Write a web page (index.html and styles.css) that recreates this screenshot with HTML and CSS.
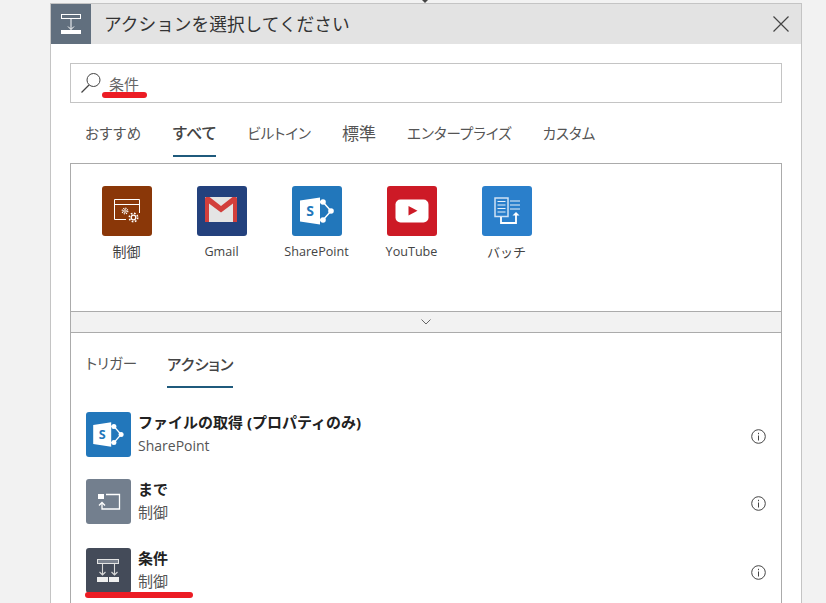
FILE: index.html
```html
<!DOCTYPE html>
<html lang="ja">
<head>
  <meta charset="UTF-8" />
  <title>アクションを選択してください</title>
  <link rel="stylesheet" href="styles.css">
</head>
<body>
  <div class="top-caret"></div>
  <div class="panel">
    <div class="panel-header">
      <div class="header-icon">
        <svg width="40" height="40" viewBox="0 0 40 40">
          <rect x="10.500" y="10.500" width="19" height="4" fill="none" stroke="#fff"/>
          <path d="M20 15v10.500M17 22.500l3 3 3-3" fill="none" stroke="#fff"/>
          <rect x="10" y="26" width="20" height="4" fill="#fff"/>
        </svg>
      </div>
      <div class="header-title">アクションを選択してください</div>
      <svg class="close-icon" width="16" height="16" viewBox="0 0 16 16">
        <path d="M.5.5l15 15M15.500.5l-15 15" stroke="#444" stroke-width="1.2" fill="none"/>
      </svg>
    </div>

    <div class="panel-body">
      <div class="search-box">
        <svg width="22" height="22" viewBox="0 0 22 22">
          <circle cx="13.500" cy="8" r="6.500" fill="none" stroke="#444" stroke-width="1"/>
          <path d="M9 13L1.500 20.500" stroke="#444" stroke-width="1.200" fill="none"/>
        </svg>
        <span class="search-text">条件</span>
      </div>

      <div class="tabs">
        <span class="tab tab-wide">おすすめ</span>
        <span class="tab active">すべて</span>
        <span class="tab">ビルトイン</span>
        <span class="tab tab-kanji">標準</span>
        <span class="tab">エンタープライズ</span>
        <span class="tab">カスタム</span>
      </div>

      <div class="connector-box">
        <div class="connector">
          <div class="tile brown">
            <svg width="50" height="50" viewBox="0 0 50 50">
              <path d="M24 33.500H12.500V13.500h25V27M12.500 18.500h25" fill="none" stroke="#fff" stroke-width="1"/>
              <circle cx="23" cy="25" r="1.300" fill="none" stroke="#fff" stroke-width="1"/>
              <circle cx="23" cy="25" r="2.800" fill="none" stroke="#fff" stroke-width="1.200" stroke-dasharray="1.200 1"/>
              <circle cx="31.500" cy="31.500" r="2.300" fill="none" stroke="#fff" stroke-width="1.300"/>
              <circle cx="31.500" cy="31.500" r="4.200" fill="none" stroke="#fff" stroke-width="1.600" stroke-dasharray="1.700 1.600"/>
            </svg>
          </div>
          <div class="tile-label label-kanji">制御</div>
        </div>
        <div class="connector">
          <div class="tile navy">
            <svg width="50" height="50" viewBox="0 0 50 50">
              <rect x="8" y="11" width="32" height="25" rx="1" fill="#e4e4e4"/>
              <path d="M12 36H8V12.500c0-1 1-1.500 2-1.500h2.500L24 20l11.500-9H38c1 0 2 .5 2 1.500V36h-4V17.500L24 26.500 12 17.500z" fill="#d23f3c"/>
            </svg>
          </div>
          <div class="tile-label">Gmail</div>
        </div>
        <div class="connector">
          <div class="tile blue">
            <svg width="50" height="50" viewBox="0 0 50 50">
              <use href="#sp-mark"/>
            </svg>
          </div>
          <div class="tile-label">SharePoint</div>
        </div>
        <div class="connector">
          <div class="tile red">
            <svg width="50" height="50" viewBox="0 0 50 50">
              <rect x="8.500" y="13.500" width="33" height="23" rx="5" fill="#fff"/>
              <path d="M21.500 20v9.500l9-4.700z" fill="#cd1a26"/>
            </svg>
          </div>
          <div class="tile-label">YouTube</div>
        </div>
        <div class="connector">
          <div class="tile batch">
            <svg width="50" height="50" viewBox="0 0 50 50">
              <rect x="13" y="12" width="13" height="18.500" fill="none" stroke="#cfe2f5" stroke-width="1.500"/>
              <path d="M15.500 15.500h8M15.500 19h8M15.500 22.500h8M15.500 26h8M28 15h10M28 19h10M28 23h10" stroke="#e8f1fa" stroke-width="1.200" fill="none"/>
              <path d="M19 31v6h15v-8" fill="none" stroke="#fff" stroke-width="1.800"/>
              <path d="M30.500 29.500l3.500-3.500 3.500 3.500z" fill="#fff"/>
            </svg>
          </div>
          <div class="tile-label label-kana">バッチ</div>
        </div>
      </div>

      <div class="collapse-bar">
        <svg width="10" height="6" viewBox="0 0 10 6">
          <path d="M.5.500L5 5 9.500.500" fill="none" stroke="#666" stroke-width="1"/>
        </svg>
      </div>

      <div class="action-box">
        <div class="tabs sub-tabs">
          <span class="tab">トリガー</span>
          <span class="tab active">アクション</span>
        </div>

        <div class="action-row">
          <div class="row-icon blue">
            <svg width="45" height="45" viewBox="0 0 50 50">
              <use href="#sp-mark"/>
            </svg>
          </div>
          <div class="row-text">
            <div class="row-title">ファイルの取得 (プロパティのみ)</div>
            <div class="row-sub">SharePoint</div>
          </div>
          <svg class="info-icon" width="15" height="15" viewBox="0 0 15 15">
            <circle cx="7.500" cy="7.500" r="6.800" fill="none" stroke="#444" stroke-width="1"/>
            <path d="M7.500 6.500v5M7.500 3.800v1.400" stroke="#444" stroke-width="1" fill="none"/>
          </svg>
        </div>

        <div class="action-row row-tall">
          <div class="row-icon slate">
            <svg width="45" height="45" viewBox="0 0 45 45">
              <rect x="12" y="15" width="6" height="5" fill="#fff"/>
              <path d="M20 15.500h13.500v14.500H16V24" fill="none" stroke="#fff" stroke-width="1.300"/>
              <path d="M13 26.500l3-3 3 3" fill="none" stroke="#fff" stroke-width="1.300"/>
            </svg>
          </div>
          <div class="row-text">
            <div class="row-title">まで</div>
            <div class="row-sub sub-kanji">制御</div>
          </div>
          <svg class="info-icon" width="15" height="15" viewBox="0 0 15 15">
            <circle cx="7.500" cy="7.500" r="6.800" fill="none" stroke="#444" stroke-width="1"/>
            <path d="M7.500 6.500v5M7.500 3.800v1.400" stroke="#444" stroke-width="1" fill="none"/>
          </svg>
        </div>

        <div class="action-row">
          <div class="row-icon dark">
            <svg width="45" height="45" viewBox="0 0 45 45">
              <rect x="11.500" y="11.500" width="21" height="4" fill="#7d8490" stroke="#e4e4e4" stroke-width="1"/>
              <path d="M16.500 16v11M28.500 16v11M13.500 24l3 3 3-3M25.500 24l3 3 3-3" fill="none" stroke="#d8d8d8" stroke-width="1.100"/>
              <rect x="11" y="29" width="11" height="5" fill="#eee"/>
              <rect x="23" y="29" width="10" height="5" fill="#eee"/>
            </svg>
          </div>
          <div class="row-text">
            <div class="row-title">条件</div>
            <div class="row-sub sub-kanji">制御</div>
          </div>
          <svg class="info-icon" width="15" height="15" viewBox="0 0 15 15">
            <circle cx="7.500" cy="7.500" r="6.800" fill="none" stroke="#444" stroke-width="1"/>
            <path d="M7.500 6.500v5M7.500 3.800v1.400" stroke="#444" stroke-width="1" fill="none"/>
          </svg>
        </div>
      </div>
    </div>
  </div>

  <!-- red marker lines drawn over the screenshot -->
  <div class="marker marker-search"></div>
  <div class="marker marker-row"></div>

  <svg class="defs" width="0" height="0">
    <defs>
      <g id="sp-mark">
        <path d="M28 16h3l8 9-8 9h-3" fill="none" stroke="#fff" stroke-width="1.500"/>
        <circle cx="31" cy="16" r="2.800" fill="#fff"/>
        <circle cx="39" cy="25" r="2.800" fill="#fff"/>
        <circle cx="31" cy="34" r="2.800" fill="#fff"/>
        <path d="M8 14.500L28 11.500v27L8 35.500z" fill="#fff"/>
        <text x="18" y="30" class="sp-letter">S</text>
      </g>
    </defs>
  </svg>
</body>
</html>
```

FILE: styles.css
```css
html, body {
  height: 603px;
  overflow: hidden;
}

body {
  margin: 0;
  padding-top: 3px;
  box-sizing: border-box;
  background-color: #f2f2f2;
  font-family: "Open Sans", "Noto Sans CJK JP", sans-serif;
  color: #333;
  position: relative;
}

.top-caret {
  position: absolute;
  left: 422px;
  top: 0;
  width: 0;
  height: 0;
  border-left: 3px solid transparent;
  border-right: 3px solid transparent;
  border-top: 3px solid #444;
}

.panel {
  width: 752px;
  height: 600px;
  margin-left: 50px;
  box-sizing: border-box;
  background-color: white;
  border: 1px solid #c4c4c4;
  border-bottom: none;
}

.panel-header {
  height: 40px;
  display: flex;
  align-items: center;
  background-color: #e3e3e3;
}

.header-icon {
  width: 40px;
  height: 40px;
  background-color: #616f7e;
}

.header-title {
  flex: 1;
  margin-left: 13px;
  padding-bottom: 2px;
  font-size: 17.700px;
  color: #333;
}

.close-icon {
  margin-right: 12px;
}

.panel-body {
  padding: 19px 19px 0;
}

.search-box {
  height: 38px;
  display: flex;
  align-items: center;
  border: 1px solid #c4c4c4;
  padding-left: 9px;
}

.search-text {
  margin-left: 7px;
  font-size: 15px;
  color: #666;
}

.tabs {
  display: flex;
  gap: 31px;
  height: 60px;
  box-sizing: border-box;
  padding: 18px 0 0 15px;
}

.tab {
  height: 36px;
  font-size: 14.500px;
  font-feature-settings: "palt";
  line-height: 25px;
  color: #555;
  box-sizing: border-box;
}

.tab.active {
  font-size: 16px;
  color: #444;
  font-weight: 500;
  border-bottom: 2px solid #1f5a7c;
}

.tab-wide {
  letter-spacing: .5px;
}

.tab-kanji {
  font-size: 17px;
}

.connector-box {
  height: 149px;
  display: flex;
  box-sizing: border-box;
  padding: 22px 0 0 8px;
  border: 1px solid #ababab;
}

.connector {
  width: 95px;
  display: flex;
  flex-direction: column;
  align-items: center;
}

.tile {
  width: 50px;
  height: 50px;
  border-radius: 3px;
}

.tile-label {
  margin-top: 6px;
  font-size: 12.600px;
  line-height: 20px;
  color: #444;
}

.label-kanji {
  font-size: 14px;
}

.label-kana {
  font-size: 13px;
}

.brown { background-color: #8a3708; }
.navy { background-color: #23417d; }
.blue { background-color: #2277bb; }
.red { background-color: #cd1a26; }
.batch { background-color: #2a7fcb; }
.slate { background-color: #737f8e; }
.dark { background-color: #444b59; }

.sp-letter {
  font-family: "Open Sans", sans-serif;
  font-size: 14px;
  font-weight: 700;
  fill: #2277bb;
  text-anchor: middle;
}

.collapse-bar {
  height: 20px;
  display: flex;
  justify-content: center;
  align-items: center;
  background-color: #f2f2f2;
  border-left: 1px solid #ababab;
  border-right: 1px solid #ababab;
}

.action-box {
  height: 271px;
  box-sizing: border-box;
  overflow: hidden;
  padding: 0 0 0 15px;
  border: 1px solid #ababab;
  border-bottom: none;
}

.sub-tabs {
  height: 79px;
  padding: 19px 0 0 0;
  gap: 30px;
}

.sub-tabs .tab {
  height: 36px;
  line-height: 24px;
}

.sub-tabs .tab.active {
  font-size: 15.300px;
}

.action-row {
  height: 67px;
  display: flex;
  padding-right: 15px;
  box-sizing: border-box;
}

.row-tall {
  height: 69px;
}

.row-icon {
  width: 45px;
  height: 45px;
  border-radius: 3px;
}

.row-text {
  flex: 1;
  margin-left: 7px;
}

.row-title {
  font-size: 15px;
  line-height: 20px;
  font-weight: 700;
  color: #222;
}

.row-sub {
  margin-top: 4px;
  font-size: 14px;
  line-height: 20px;
  color: #555;
}

.sub-kanji {
  margin-top: 3px;
  font-size: 15px;
}

.info-icon {
  margin-top: 17px;
}

.marker {
  position: absolute;
  height: 6px;
  border-radius: 3px;
  background-color: #ec1c24;
}

.marker-search {
  left: 102px;
  top: 92px;
  width: 45px;
}

.marker-row {
  left: 85px;
  top: 592px;
  width: 108px;
}

.defs {
  position: absolute;
}
```
